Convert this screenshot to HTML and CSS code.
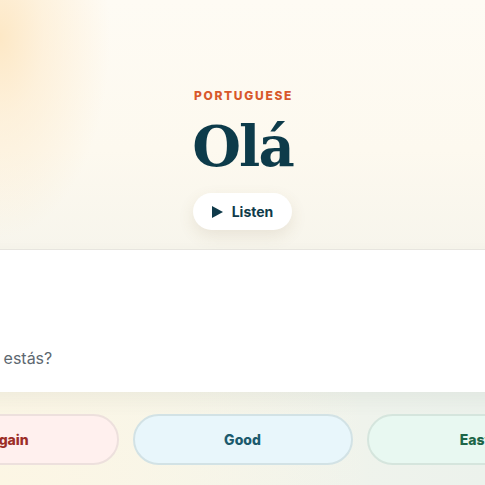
FILE: index.html
```html
<!DOCTYPE html>
<html lang="en">
<head>
    <meta charset="UTF-8">
    <meta name="viewport" content="width=device-width, initial-scale=1.0">
    <title>Flashcard</title>
    <link rel="stylesheet" href="styles.css">
</head>
<body>
    <div class="stage">
        <section class="hero">
            <div class="lang">Portuguese</div>
            <h1 class="word">Olá</h1>
            <button class="listen">
                <svg width="11" height="12" viewBox="0 0 11 12"><path d="M0 0 L11 6 L0 12 Z" fill="#0f3a4a"/></svg>
                Listen
            </button>
        </section>

        <section class="example">
            <p>Olá, como estás?</p>
        </section>

        <div class="ratings">
            <button class="rate again">Again</button>
            <button class="rate good">Good</button>
            <button class="rate easy">Easy</button>
        </div>
    </div>
</body>
</html>
```

FILE: styles.css
```css
/* page */
body {
    margin: 0;
    font-family: Inter, "Noto Sans", sans-serif;
    overflow: hidden;
    background:
        radial-gradient(ellipse at 0% 100%, #fcf6e4 0, rgba(252, 246, 228, 0) 55%),
        linear-gradient(90deg, #f8f6ec, #ecf2ec);
    height: 485px;
}

.stage {
    display: flex;
    flex-direction: column;
    align-items: center;
}

/* top part of the card */
.hero {
    align-self: stretch;
    height: 250px;
    box-sizing: border-box;
    padding-top: 88px;
    display: flex;
    flex-direction: column;
    align-items: center;
    background:
        radial-gradient(ellipse 110px 200px at 0% 15%, #fde8c6 0, rgba(253, 232, 198, 0.5) 40%, rgba(253, 232, 198, 0) 100%),
        linear-gradient(180deg, #fefbf4 0, #fdf9ef 60%, #f7f5ec 100%);
    border-bottom: 1px solid #e9e7e1;
}

.lang {
    font-size: 12px;
    line-height: 16px;
    font-weight: 800;
    letter-spacing: 1.7px;
    text-transform: uppercase;
    color: #d8582b;
    margin-left: 2px;
}

.word {
    font-family: "DejaVu Serif", serif;
    font-size: 56px;
    line-height: 56px;
    font-weight: bold;
    letter-spacing: -2px;
    color: #0d3b4a;
    margin: 14px 0 0;
}

.listen {
    margin-top: 19px;
    height: 37px;
    width: 99px;
    display: flex;
    align-items: center;
    justify-content: center;
    gap: 9px;
    border: none;
    border-radius: 19px;
    background: #fff;
    box-shadow: 0 6px 16px rgba(120, 100, 60, 0.12);
    font-family: Inter, sans-serif;
    font-size: 14px;
    font-weight: 700;
    color: #0f3a4a;
    padding: 0;
}

/* example sentence */
.example {
    width: 688px;
    height: 142px;
    box-sizing: border-box;
    background: #fff;
    display: flex;
    align-items: flex-end;
    padding: 0 24px 22px;
    box-shadow: 0 8px 18px rgba(90, 100, 90, 0.07);
}

.example p {
    margin: 0;
    font-size: 16px;
    line-height: 24px;
    color: #5d6870;
}

/* rating buttons */
.ratings {
    display: flex;
    gap: 14px;
    margin-top: 22px;
}

.rate {
    width: 220px;
    height: 51px;
    border-radius: 26px;
    border: 2px solid;
    font-family: Inter, sans-serif;
    font-size: 14px;
    font-weight: 800;
}

.again {
    background: #fff0ee;
    border-color: #ede0dd;
    color: #9c2e27;
}

.good {
    background: #e8f6fb;
    border-color: #d2e2e5;
    color: #1b5a6d;
}

.easy {
    background: #e8f8f1;
    border-color: #d5e5dd;
    color: #1d6648;
}
```
